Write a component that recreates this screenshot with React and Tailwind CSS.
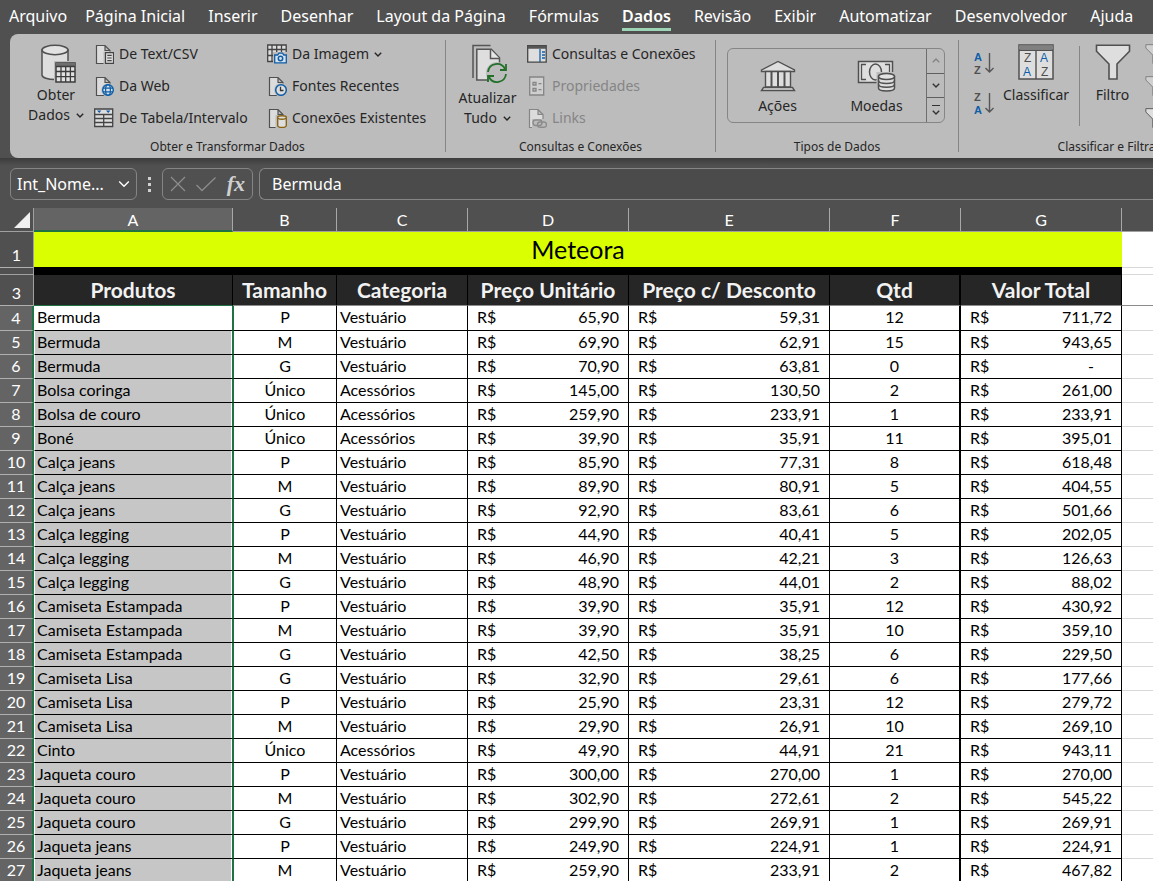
import React from 'react';

const tabs = [
  'Página Inicial',
  'Inserir',
  'Desenhar',
  'Layout da Página',
  'Fórmulas',
  'Dados',
  'Revisão',
  'Exibir',
  'Automatizar',
  'Desenvolvedor',
  'Ajuda',
];

const columns = [
  { letter: 'A', title: 'Produtos', width: 'w-[199px]' },
  { letter: 'B', title: 'Tamanho', width: 'w-[104px]' },
  { letter: 'C', title: 'Categoria', width: 'w-[131px]' },
  { letter: 'D', title: 'Preço Unitário', width: 'w-[161px]' },
  { letter: 'E', title: 'Preço c/ Desconto', width: 'w-[201px]' },
  { letter: 'F', title: 'Qtd', width: 'w-[131px]' },
  { letter: 'G', title: 'Valor Total', width: 'w-[161px]' },
];

const rows = [
  ['Bermuda', 'P', 'Vestuário', '65,90', '59,31', '12', '711,72'],
  ['Bermuda', 'M', 'Vestuário', '69,90', '62,91', '15', '943,65'],
  ['Bermuda', 'G', 'Vestuário', '70,90', '63,81', '0', '-'],
  ['Bolsa coringa', 'Único', 'Acessórios', '145,00', '130,50', '2', '261,00'],
  ['Bolsa de couro', 'Único', 'Acessórios', '259,90', '233,91', '1', '233,91'],
  ['Boné', 'Único', 'Acessórios', '39,90', '35,91', '11', '395,01'],
  ['Calça jeans', 'P', 'Vestuário', '85,90', '77,31', '8', '618,48'],
  ['Calça jeans', 'M', 'Vestuário', '89,90', '80,91', '5', '404,55'],
  ['Calça jeans', 'G', 'Vestuário', '92,90', '83,61', '6', '501,66'],
  ['Calça legging', 'P', 'Vestuário', '44,90', '40,41', '5', '202,05'],
  ['Calça legging', 'M', 'Vestuário', '46,90', '42,21', '3', '126,63'],
  ['Calça legging', 'G', 'Vestuário', '48,90', '44,01', '2', '88,02'],
  ['Camiseta Estampada', 'P', 'Vestuário', '39,90', '35,91', '12', '430,92'],
  ['Camiseta Estampada', 'M', 'Vestuário', '39,90', '35,91', '10', '359,10'],
  ['Camiseta Estampada', 'G', 'Vestuário', '42,50', '38,25', '6', '229,50'],
  ['Camiseta Lisa', 'G', 'Vestuário', '32,90', '29,61', '6', '177,66'],
  ['Camiseta Lisa', 'P', 'Vestuário', '25,90', '23,31', '12', '279,72'],
  ['Camiseta Lisa', 'M', 'Vestuário', '29,90', '26,91', '10', '269,10'],
  ['Cinto', 'Único', 'Acessórios', '49,90', '44,91', '21', '943,11'],
  ['Jaqueta couro', 'P', 'Vestuário', '300,00', '270,00', '1', '270,00'],
  ['Jaqueta couro', 'M', 'Vestuário', '302,90', '272,61', '2', '545,22'],
  ['Jaqueta couro', 'G', 'Vestuário', '299,90', '269,91', '1', '269,91'],
  ['Jaqueta jeans', 'P', 'Vestuário', '249,90', '224,91', '1', '224,91'],
  ['Jaqueta jeans', 'M', 'Vestuário', '259,90', '233,91', '2', '467,82'],
];

const ChevronDown = ({ className, strokeWidth = 1.4 }) => (
  <svg className={className} viewBox="0 0 8 5" fill="none" stroke="currentColor" strokeWidth={strokeWidth}>
    <path d="M0.8 0.8 L4 4 L7.2 0.8" />
  </svg>
);

const DatabaseIcon = () => (
  <svg className="w-9 h-10" viewBox="0 0 36 40" fill="none" stroke="#505050" strokeWidth="1.5">
    <path d="M1 6v25c0 2.600 5.800 4.500 13 4.500s13-1.900 13-4.500V6z" fill="#dedede" />
    <ellipse cx="14" cy="6" rx="13" ry="4.700" fill="#e2e2e2" />
    <path d="M13 17h23v23H13z" fill="#bcbcbc" stroke="none" />
    <path d="M15 19h19v19H15z" fill="#e2e2e2" stroke="#3c3c3c" />
    <path d="M15 20.500h19" stroke="#6e6e6e" strokeWidth="3" />
    <path d="M15 22.500h19M15 27.500h19M15 32.700h19M20 22v16M24.700 22v16M29.400 22v16" stroke="#3c3c3c" strokeWidth="1.300" />
  </svg>
);

const DocBase = ({ stroke = '#505050' }) => (
  <path d="M2.500 19.500v-18h8.500l5 5v13zM11 1.500v5h5" fill="#dcdcdc" stroke={stroke} />
);

const TextFileIcon = () => (
  <svg className="w-5 h-5" viewBox="0 0 20 20" fill="none" strokeWidth="1.200">
    <DocBase />
    <path d="M9.500 7.500H21V20H9.500z" fill="#bcbcbc" />
    <path d="M11.500 8.600h8v10.800h-8z" fill="#dedede" stroke="#444" />
    <path d="M13.300 11.300h4.400M13.300 14h4.400M13.300 16.600h4.400" stroke="#444" />
  </svg>
);

const WebFileIcon = () => (
  <svg className="w-5 h-5" viewBox="0 0 20 20" fill="none" strokeWidth="1.200">
    <DocBase />
    <circle cx="14" cy="14" r="6.800" fill="#bcbcbc" />
    <circle cx="14" cy="14" r="5.300" fill="#d5dfe8" stroke="#0f5ea8" strokeWidth="1.400" />
    <ellipse cx="14" cy="14" rx="2.400" ry="5.300" stroke="#0f5ea8" />
    <path d="M9 12.200h10M9 15.800h10" stroke="#0f5ea8" />
  </svg>
);

const TableRangeIcon = () => (
  <svg className="w-5 h-5" viewBox="0 0 20 20" fill="none" stroke="#444" strokeWidth="1.300">
    <path d="M0.700 1h18v17.500h-18z" fill="#dedede" />
    <path d="M0.700 6.500h18M0.700 10.500h18M0.700 14.500h18M9.700 6.500v12" />
    <path d="M3 2.500h4.400l-2.200 2.500zM12 2.500h4.400l-2.200 2.500z" fill="#0f5ea8" stroke="none" />
  </svg>
);

const ImageTableIcon = () => (
  <svg className="w-5 h-5" viewBox="0 0 20 20" fill="none" stroke="#444" strokeWidth="1.300">
    <path d="M0.700 1h18.500v16.500H0.700z" fill="#dedede" />
    <path d="M0.700 5.500h18.500M0.700 11.500h18.500M5 1v16.500M9.700 1v16.500M14.500 1v16.500" />
    <path d="M6 8h14v12H6z" fill="#bcbcbc" stroke="none" />
    <path d="M7.700 11h3l1.300-1.800h3.500l1.300 1.800h2.500v7.800H7.700z" fill="#d8e2ec" stroke="#0f5ea8" />
    <circle cx="13.500" cy="14.500" r="2.200" stroke="#0f5ea8" strokeWidth="1.500" />
  </svg>
);

const RecentIcon = () => (
  <svg className="w-5 h-5" viewBox="0 0 20 20" fill="none" strokeWidth="1.200">
    <DocBase />
    <circle cx="14" cy="14" r="6.900" fill="#bcbcbc" />
    <circle cx="14" cy="14" r="5.300" fill="#dedede" stroke="#0f5ea8" strokeWidth="1.500" />
    <path d="M13.500 10.700v3.800h3" stroke="#333" strokeWidth="1.300" />
  </svg>
);

const ConnectionIcon = () => (
  <svg className="w-5 h-5" viewBox="0 0 20 20" fill="none" strokeWidth="1.200">
    <DocBase />
    <path d="M8.500 7H21v13H8.500z" fill="#bcbcbc" />
    <path d="M10.700 9.500v8c0 1.200 2 2 4.300 2s4.300-0.800 4.300-2v-8z" fill="#dedede" stroke="#8a6414" strokeWidth="1.400" />
    <ellipse cx="15" cy="9.500" rx="4.300" ry="1.700" fill="#dedede" stroke="#8a6414" strokeWidth="1.400" />
  </svg>
);

const RefreshIcon = () => (
  <svg className="w-9 h-10" viewBox="0 0 36 40" fill="none" stroke="#555" strokeWidth="1.500">
    <path d="M1 34V1.500h17.500" />
    <path d="M4.800 36V5.300h14.500l8.200 8.500V36z" fill="#dedede" />
    <path d="M18.500 5.500v9h9" fill="#e6e6e6" />
    <circle cx="25" cy="29" r="11" fill="#bcbcbc" stroke="none" />
    <path d="M16 28a9 9 0 0 1 17-3M34 30a9 9 0 0 1-17 3" stroke="#22702a" strokeWidth="1.800" />
    <path d="M34 20v6h-6M16 38v-6h6" stroke="#22702a" strokeWidth="1.800" />
  </svg>
);

const PaneIcon = () => (
  <svg className="w-5 h-5" viewBox="0 0 20 20" fill="none" stroke="#444" strokeWidth="1.300">
    <path d="M0.700 1.700h18.500v16.500H0.700z" fill="#dedede" />
    <path d="M0.700 3.200h18.500" stroke="#555" strokeWidth="3" />
    <path d="M13 5v13" stroke="#0f5ea8" />
    <path d="M15 8h3M15 11h3M15 14h3" stroke="#0f5ea8" strokeWidth="1.500" />
  </svg>
);

const PropertiesIcon = () => (
  <svg className="w-5 h-5" viewBox="0 0 20 20" fill="none" stroke="#858585" strokeWidth="1.300">
    <path d="M2.700 1h14v18h-14z" fill="#cfcfcf" />
    <path d="M6 6.500h3v2.500H6zM6 12.500h3V15H6zM11.500 7.700h3M11.500 13.700h3" />
  </svg>
);

const LinkFileIcon = () => (
  <svg className="w-5 h-5" viewBox="0 0 20 20" fill="none" strokeWidth="1.200">
    <DocBase stroke="#858585" />
    <path d="M5 11h16v9H5z" fill="#bcbcbc" />
    <g stroke="#8c8c8c" strokeWidth="1.400">
      <rect x="6" y="12" width="9" height="5.500" rx="2.700" />
      <rect x="10.500" y="14" width="9" height="5.300" rx="2.600" />
    </g>
  </svg>
);

const BankIcon = () => (
  <svg className="w-9 h-8" viewBox="0 0 36 32" fill="#dedede" stroke="#505050" strokeWidth="1.400">
    <path d="M1.500 10L18 1.500L34.500 10v1.500h-33z" />
    <path d="M5.500 11.500h25V27h-25z" />
    <path d="M11.500 11.500V27M18 11.500V27M24.500 11.500V27" strokeWidth="2" />
    <path d="M3.500 27.500h29l2 3h-33z" />
  </svg>
);

const MoneyIcon = () => (
  <svg className="w-10 h-8" viewBox="0 0 40 32" fill="none" stroke="#505050" strokeWidth="1.500">
    <path d="M1.500 1.500h34v21h-34z" fill="#dedede" />
    <path d="M9 4.500H4.500v15H9M28 4.500h4.500v15" strokeWidth="1.300" />
    <ellipse cx="18.500" cy="12" rx="6" ry="8" />
    <path d="M19.500 12h20v20h-20z" fill="#bcbcbc" stroke="none" />
    <path d="M21.500 16.500v11.500c0 1.800 3.500 3 8 3s8-1.200 8-3V16.500z" fill="#dedede" />
    <ellipse cx="29.500" cy="16.500" rx="8" ry="3" fill="#e2e2e2" />
    <path d="M21.500 20.500c0 1.700 3.500 3 8 3s8-1.300 8-3M21.500 24.300c0 1.700 3.500 3 8 3s8-1.300 8-3" />
  </svg>
);

const SortIcon = ({ first, second, firstColor, secondColor }) => (
  <svg
    className="w-5 h-6 shrink-0 overflow-visible"
    viewBox="0 0 20 24"
    fontFamily="'Liberation Sans', sans-serif"
    fontSize="11"
    fontWeight="700"
  >
    <text x="0" y="10" fill={firstColor}>{first}</text>
    <text x="0" y="23" fill={secondColor}>{second}</text>
    <path d="M15.500 2v19M11.500 17l4 4l4-4" fill="none" stroke="#555" strokeWidth="1.400" />
  </svg>
);

const SortDialogIcon = () => (
  <svg
    className="w-9 h-9 overflow-visible"
    viewBox="0 0 36 36"
    fontFamily="'Liberation Sans', sans-serif"
    fontSize="12"
  >
    <path d="M1 1h34v34H1z" fill="#dedede" stroke="#505050" strokeWidth="1.500" />
    <path d="M1 3.500h34" stroke="#808080" strokeWidth="4" />
    <path d="M1 6.300h34M18 6v29" stroke="#505050" strokeWidth="1.400" />
    <text x="6" y="18" fill="#505050">Z</text>
    <text x="5" y="32" fill="#0f5ea8">A</text>
    <text x="22" y="18" fill="#0f5ea8">A</text>
    <text x="23" y="32" fill="#505050">Z</text>
  </svg>
);

const FunnelIcon = ({ className = 'w-9 h-9' }) => (
  <svg className={className} viewBox="0 0 36 36" fill="#dedede" stroke="#505050" strokeWidth="1.600">
    <path d="M1.500 1.200h33v6L22 20v15h-8V20L1.500 7.200z" />
  </svg>
);

const SmallButton = ({ icon, label, chevron, disabled }) => (
  <button
    type="button"
    disabled={disabled}
    className={`flex items-center gap-[5px] h-8 whitespace-nowrap text-sm ${disabled ? 'text-[#858585]' : 'text-[#262626]'}`}
  >
    {icon}
    <span>{label}</span>
    {chevron && <ChevronDown className="w-2 h-[5px]" />}
  </button>
);

const BigButton = ({ icon, lines, chevron }) => (
  <button type="button" className="flex flex-col items-center text-sm leading-5 text-[#262626]">
    {icon}
    {lines.map((line, i) => (
      <span key={line} className="flex items-center gap-1.5 whitespace-nowrap">
        {line}
        {chevron && i === lines.length - 1 && <ChevronDown className="w-2 h-[5px]" />}
      </span>
    ))}
  </button>
);

const Group = ({ title, className, children }) => (
  <section className={`flex flex-col shrink-0 ${className}`}>
    <div className="flex h-[102px]">{children}</div>
    <h2 className="text-center text-xs leading-[22px] whitespace-nowrap text-[#262626]">{title}</h2>
  </section>
);

const Divider = () => <div className="w-px h-28 mt-1.5 shrink-0 bg-[#858585]" />;

const Ribbon = () => (
  <div className="flex ml-2.5 h-[124px] shrink-0 overflow-hidden rounded-l-lg bg-[#bcbcbc]">
    <Group title="Obter e Transformar Dados" className="w-[435px]">
      <div className="w-[84px] pt-2.5 pl-2 flex justify-center items-start">
        <BigButton icon={<span className="pl-1.5 pb-px"><DatabaseIcon /></span>} lines={['Obter', 'Dados']} chevron />
      </div>
      <div className="w-[173px] pt-1">
        <SmallButton icon={<TextFileIcon />} label="De Text/CSV" />
        <SmallButton icon={<WebFileIcon />} label="Da Web" />
        <SmallButton icon={<TableRangeIcon />} label="De Tabela/Intervalo" />
      </div>
      <div className="pt-1">
        <SmallButton icon={<ImageTableIcon />} label="Da Imagem" chevron />
        <SmallButton icon={<RecentIcon />} label="Fontes Recentes" />
        <SmallButton icon={<ConnectionIcon />} label="Conexões Existentes" />
      </div>
    </Group>
    <Divider />
    <Group title="Consultas e Conexões" className="w-[269px]">
      <div className="w-[81px] pt-2.5 pl-0.5 flex justify-center items-start">
        <BigButton icon={<span className="pl-1.5 pb-1"><RefreshIcon /></span>} lines={['Atualizar', 'Tudo']} chevron />
      </div>
      <div className="pt-1">
        <SmallButton icon={<PaneIcon />} label="Consultas e Conexões" />
        <SmallButton icon={<PropertiesIcon />} label="Propriedades" disabled />
        <SmallButton icon={<LinkFileIcon />} label="Links" disabled />
      </div>
    </Group>
    <Divider />
    <Group title="Tipos de Dados" className="w-[242px]">
      <div className="flex w-[218px] h-[75px] mt-3.5 ml-[11px] rounded-md border border-[#858585] overflow-hidden">
        <button type="button" className="w-[99px] flex flex-col items-center justify-end pb-1.5 text-sm leading-5 text-[#262626]">
          <BankIcon />
          <span className="pt-1">Ações</span>
        </button>
        <button type="button" className="w-[99px] flex flex-col items-center justify-end pb-1.5 text-sm leading-5 text-[#262626]">
          <MoneyIcon />
          <span className="pt-1">Moedas</span>
        </button>
        <div className="flex-1 flex flex-col border-l border-[#6e6e6e] text-[#333]">
          <button type="button" aria-label="Linha anterior" className="flex-1 flex items-center justify-center text-[#858585]">
            <ChevronDown className="w-2 h-[5px] rotate-180" />
          </button>
          <button type="button" aria-label="Próxima linha" className="flex-1 flex items-center justify-center border-y border-[#5e5e5e]">
            <ChevronDown className="w-2 h-[5px]" />
          </button>
          <button type="button" aria-label="Mais" className="flex-1 flex flex-col items-center justify-center gap-1">
            <span className="w-2 h-px bg-[#333]" />
            <ChevronDown className="w-2 h-[5px]" />
          </button>
        </div>
      </div>
    </Group>
    <Divider />
    <Group title="Classificar e Filtrar" className="w-[300px]">
      <div className="flex flex-col gap-4 w-[40px] pt-[17px] pl-[15px]">
        <button type="button" aria-label="Classificar de A a Z" className="h-6">
          <SortIcon first="A" second="Z" firstColor="#0f5ea8" secondColor="#505050" />
        </button>
        <button type="button" aria-label="Classificar de Z a A" className="h-6">
          <SortIcon first="Z" second="A" firstColor="#505050" secondColor="#0f5ea8" />
        </button>
      </div>
      <div className="w-[80px] pt-2.5 pr-1.5 flex justify-center items-start">
        <BigButton icon={<span className="pb-[5px]"><SortDialogIcon /></span>} lines={['Classificar']} />
      </div>
      <div className="w-px h-20 mt-3 bg-[#858585]" />
      <div className="w-[65px] pt-2.5 flex justify-center items-start">
        <BigButton icon={<span className="pb-[5px]"><FunnelIcon /></span>} lines={['Filtro']} />
      </div>
      <div className="pt-1">
        <SmallButton icon={<FunnelIcon className="w-5 h-5 opacity-60" />} disabled />
        <SmallButton icon={<FunnelIcon className="w-5 h-5 opacity-60" />} disabled />
        <SmallButton icon={<FunnelIcon className="w-5 h-5" />} />
      </div>
    </Group>
  </div>
);

const FormulaBar = () => (
  <div className="flex items-center gap-1.5 h-[50px] shrink-0 pl-2.5 pt-0.5 text-white bg-linear-to-b from-[#3c3c3c] via-[#505050] via-15% to-[#505050]">
    <div className="flex items-center w-[127px] h-8 px-1.5 rounded-md border border-[#858585]">
      <input aria-label="Caixa de nome" defaultValue="Int_Nome..." className="w-full min-w-0 bg-transparent text-base outline-none" />
      <ChevronDown className="w-3 h-2 shrink-0" strokeWidth={0.9} />
    </div>
    <div className="w-[13px] flex flex-col items-center gap-[3px]">
      <span className="size-[3px] bg-[#d0d0d0]" />
      <span className="size-[3px] bg-[#d0d0d0]" />
      <span className="size-[3px] bg-[#d0d0d0]" />
    </div>
    <div className="flex items-center justify-between w-[91px] h-8 px-[7px] rounded-md border border-[#858585]">
      <button type="button" aria-label="Cancelar">
        <svg className="w-4 h-4" viewBox="0 0 16 16" stroke="#8c8c8c" strokeWidth="1.300">
          <path d="M1 1l14 14M15 1L1 15" />
        </svg>
      </button>
      <button type="button" aria-label="Inserir">
        <svg className="w-5 h-4" viewBox="0 0 20 16" fill="none" stroke="#8c8c8c" strokeWidth="1.300">
          <path d="M0.500 9l5.500 5.500L19.500 1.500" />
        </svg>
      </button>
      <button type="button" className="font-['Liberation_Serif',serif] font-bold italic text-[22px] leading-6 text-[#d0d0d0]">
        fx
      </button>
    </div>
    <input
      aria-label="Barra de fórmulas"
      defaultValue="Bermuda"
      className="flex-1 min-w-0 h-8 px-3 rounded-l-md border border-r-0 border-[#858585] bg-[#4b4b4b] text-base outline-none"
    />
  </div>
);

const RowHeader = ({ children, className = '' }) => (
  <th scope="row" className={`p-0 pb-0.5 border-b border-b-[#b0b0b0] font-normal text-white text-center align-bottom ${className}`}>
    {children}
  </th>
);

const Money = ({ value }) => (
  <td className="p-0 border-b border-r border-black align-top">
    <div className="flex justify-between px-[9px]">
      <span>R$</span>
      <span className={value === '-' ? 'pr-[18px]' : ''}>{value}</span>
    </div>
  </td>
);

const Sheet = () => (
  <table className="w-full table-fixed border-separate border-spacing-0 bg-white font-['Lato',sans-serif] text-base leading-[21px] text-black">
    <colgroup>
      <col className="w-[34px]" />
      {columns.map((c) => (
        <col key={c.letter} className={c.width} />
      ))}
      <col />
    </colgroup>
    <thead>
      <tr className="bg-[#505050] text-white">
        <td className="h-6 p-0 border-b border-r border-[#a0a0a0]">
          <svg className="w-4 h-4 ml-3.5" viewBox="0 0 16 16">
            <path d="M16 0v16H0z" fill="#f0f0f0" />
          </svg>
        </td>
        {columns.map((c) => (
          <th
            key={c.letter}
            scope="col"
            className={`h-6 p-0 border-r border-r-[#a8a8a8] font-normal ${
              c.letter === 'A' ? 'bg-[#646464] border-b-2 border-b-[#1f7244]' : 'border-b border-b-[#a0a0a0]'
            }`}
          >
            {c.letter}
          </th>
        ))}
        <td className="h-6 p-0 border-b border-[#a0a0a0]" />
      </tr>
      <tr>
        <RowHeader className="h-9 bg-[#505050] border-r border-r-[#a0a0a0]">1</RowHeader>
        <td colSpan={7} className="p-0 bg-[#d9ff00] border-b border-black text-center text-[25px] leading-[35px]">
          Meteora
        </td>
        <td className="p-0 border-b border-[#d8d8d8]" />
      </tr>
      <tr>
        <td className="h-[7px] p-0 bg-[#505050] border-b border-r border-[#a0a0a0]" />
        <td colSpan={7} className="p-0 bg-black" />
        <td className="p-0 border-b border-[#d8d8d8]" />
      </tr>
      <tr>
        <RowHeader className="h-[31px] bg-[#505050] border-r border-r-[#a0a0a0]">3</RowHeader>
        {columns.map((c) => (
          <th
            key={c.letter}
            scope="col"
            className={`h-[31px] p-0 bg-[#262626] whitespace-nowrap border-b text-[21px] font-bold leading-[30px] text-[#f2f2f2] ${
              c.letter === 'A' ? 'border-b-[#1f7244]' : 'border-b-[#8c8c8c]'
            } ${c.letter === 'F' ? 'border-r-2 border-r-black' : 'border-r border-r-black'}`}
          >
            {c.title}
          </th>
        ))}
        <td className="p-0 border-b border-[#8c8c8c]" />
      </tr>
    </thead>
    <tbody>
      {rows.map(([product, size, category, price, discount, qty, total], i) => (
        <tr key={i}>
          <RowHeader className={`${i === 0 ? 'h-[25px]' : 'h-6'} bg-[#646464] border-r-2 border-r-[#1f7244]`}>{i + 4}</RowHeader>
          <td
            className={`p-0 pl-0.5 border-b border-b-black border-l border-l-white border-r border-r-[#1f7244] align-top shadow-[inset_-1px_0_0_white] ${
              i === 0 ? 'bg-white' : 'bg-[#c6c6c6]'
            }`}
          >
            {product}
          </td>
          <td className="p-0 border-b border-b-black border-l border-l-[#1f7244] border-r border-r-black text-center align-top">{size}</td>
          <td className="p-0 pl-[3px] border-b border-r border-black align-top">{category}</td>
          <Money value={price} />
          <Money value={discount} />
          <td className="p-0 border-b border-b-black border-r-2 border-r-black text-center align-top">{qty}</td>
          <Money value={total} />
          <td className="p-0 border-b border-[#d8d8d8]" />
        </tr>
      ))}
    </tbody>
  </table>
);

const App = () => (
  <div className="flex flex-col h-screen overflow-hidden bg-[#505050] font-['Noto_Sans',sans-serif]">
    <nav className="flex items-start h-[34px] pl-[9px] shrink-0 gap-[23px] text-base text-white whitespace-nowrap">
      <button type="button" className="h-8 -mr-[5px]">Arquivo</button>
      {tabs.map((tab) => (
        <button
          key={tab}
          type="button"
          className={tab === 'Dados' ? 'h-[31px] pt-[3px] border-b-3 border-[#9fd5b7] font-semibold' : 'h-8'}
        >
          {tab}
        </button>
      ))}
    </nav>
    <Ribbon />
    <FormulaBar />
    <main className="flex-1 min-h-0 overflow-hidden">
      <Sheet />
    </main>
  </div>
);

export default App;
